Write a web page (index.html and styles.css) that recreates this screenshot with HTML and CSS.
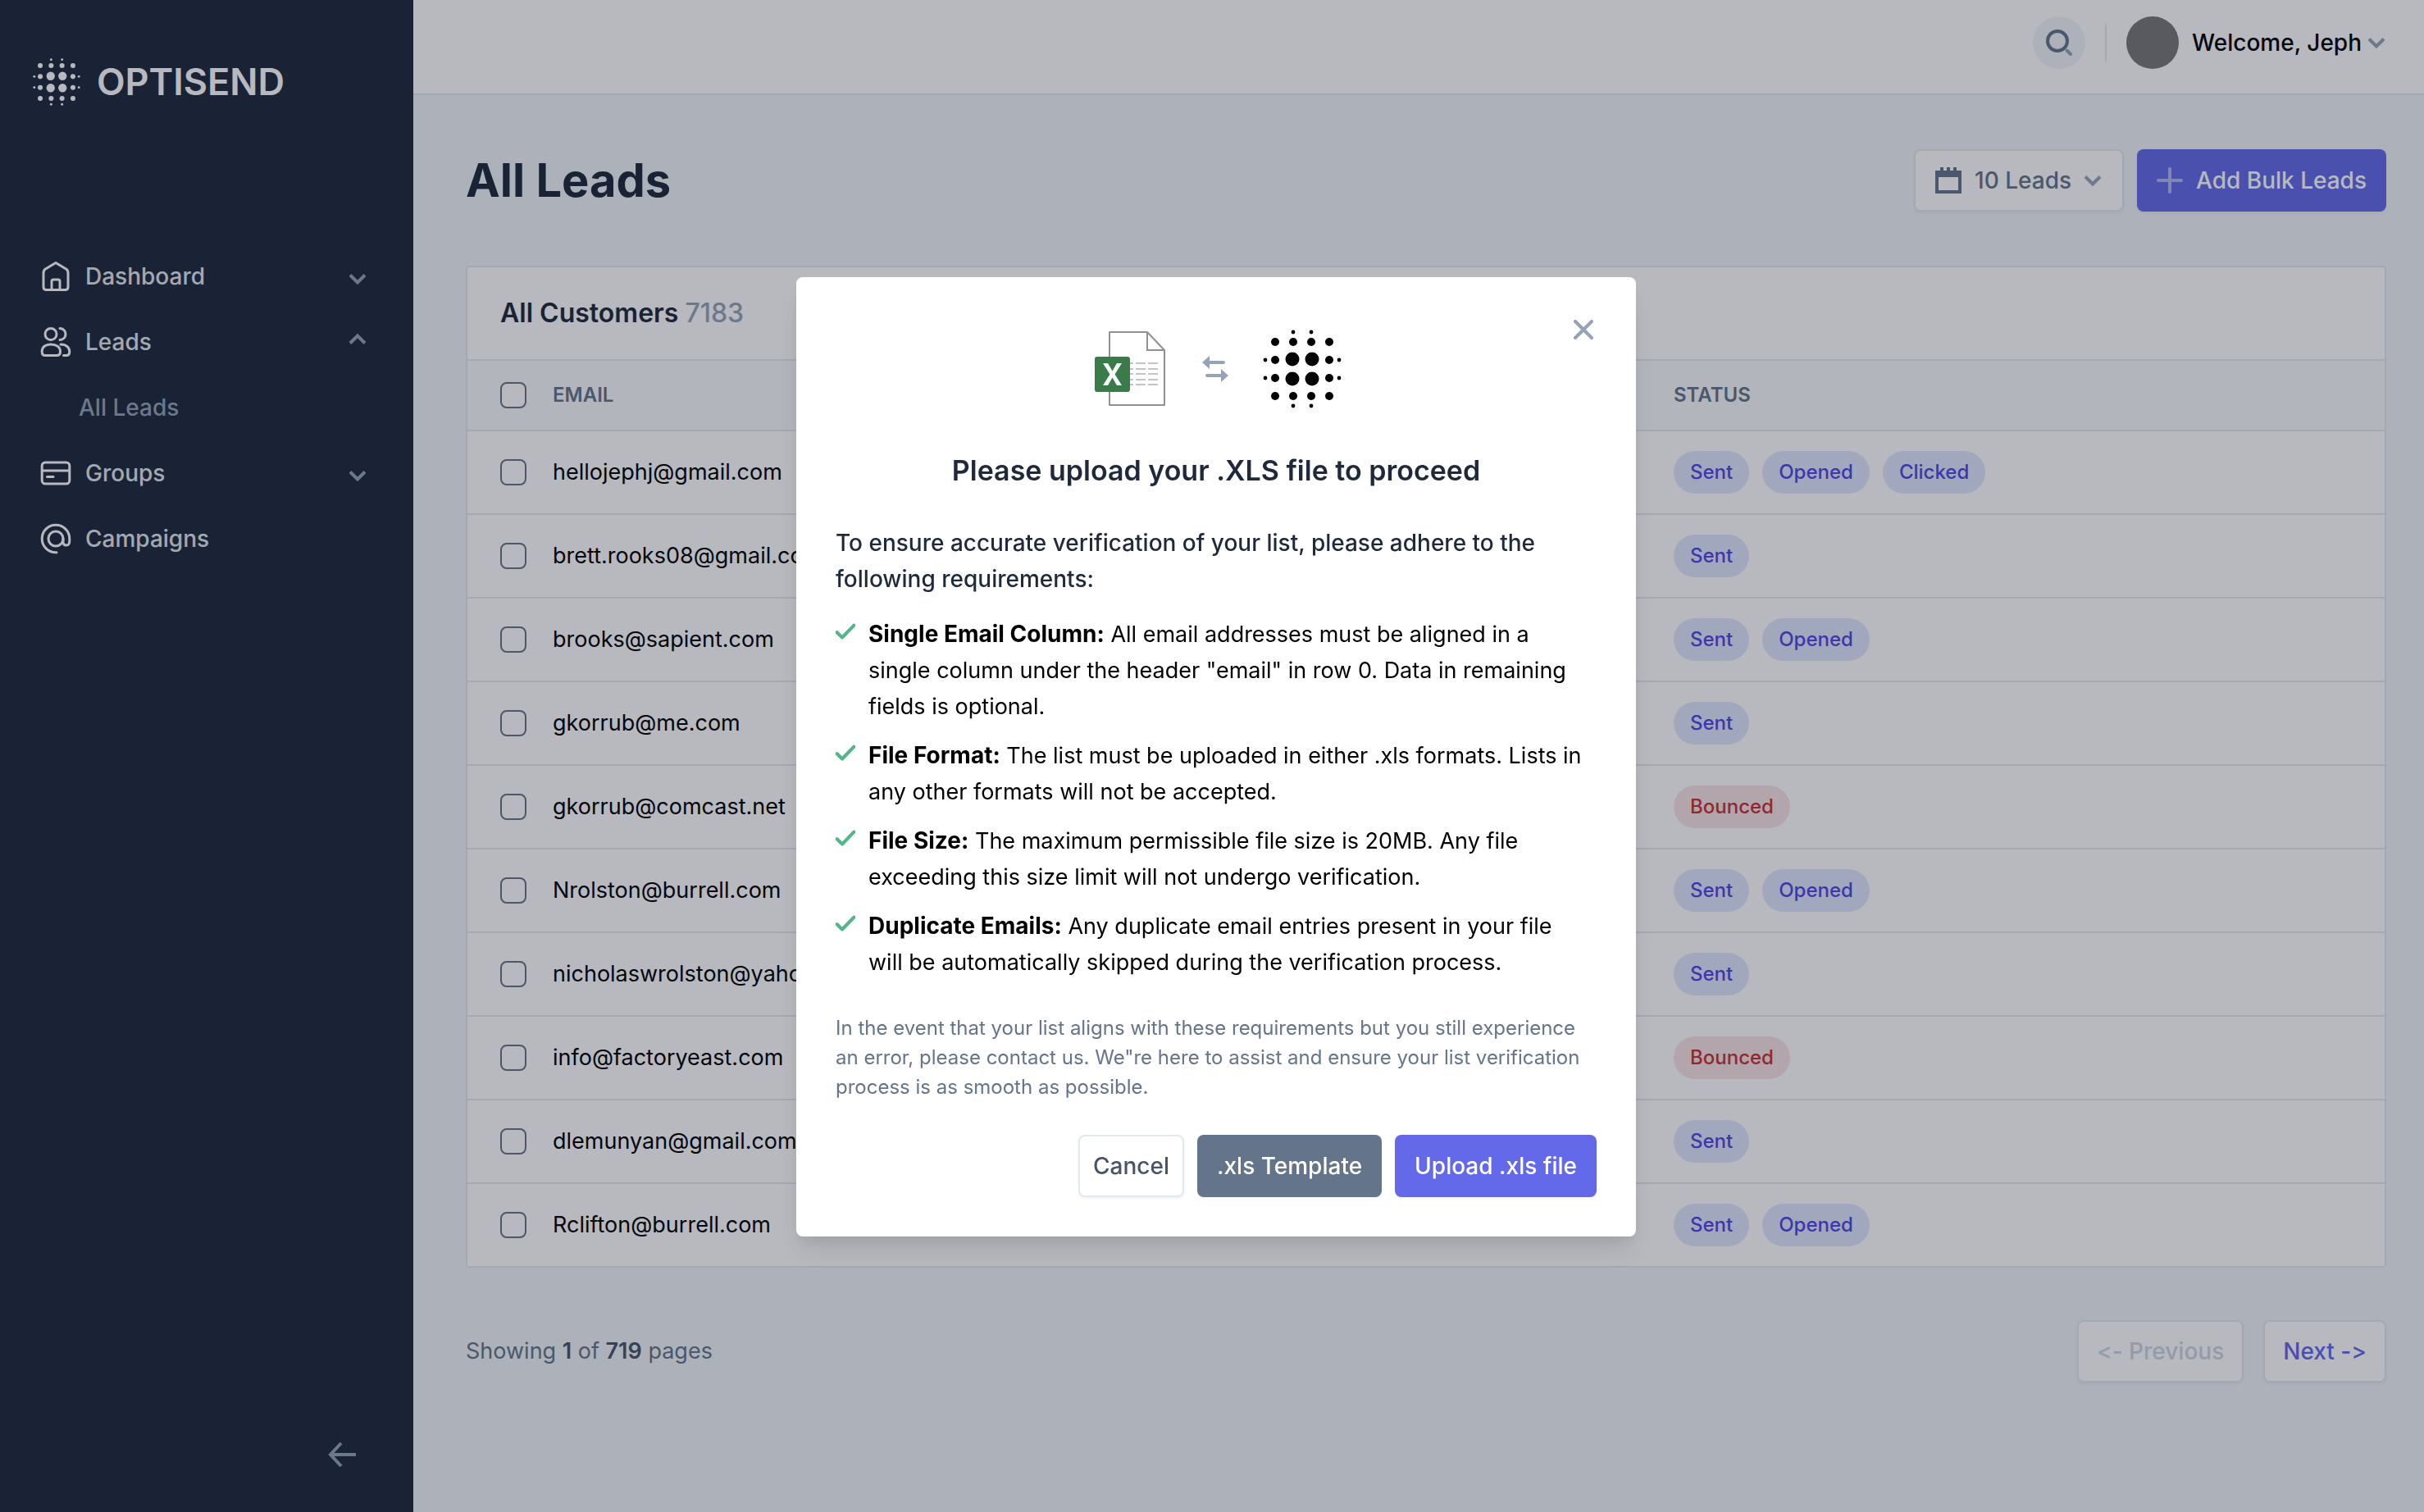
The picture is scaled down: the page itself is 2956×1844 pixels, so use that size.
FILE: index.html
```html
<!DOCTYPE html>
<html lang="en">
<head>
    <meta charset="UTF-8">
    <meta name="viewport" content="width=device-width, initial-scale=1.0">
    <title>Optisend - All Leads</title>
    <link rel="stylesheet" href="styles.css">
</head>
<body>
    <svg class="defs" aria-hidden="true">
        <symbol id="logo-dots" viewBox="0 0 96 96">
            <circle cx="37" cy="3" r="2.4"/><circle cx="59" cy="3" r="2.4"/>
            <circle cx="15" cy="15" r="5"/><circle cx="37" cy="15" r="5"/><circle cx="59" cy="15" r="5"/><circle cx="81" cy="15" r="5"/>
            <circle cx="3" cy="37" r="2.4"/><circle cx="15" cy="37" r="5"/><circle cx="36" cy="36" r="8.5"/><circle cx="60" cy="36" r="8.5"/><circle cx="81" cy="37" r="5"/><circle cx="93" cy="37" r="2.4"/>
            <circle cx="3" cy="59" r="2.4"/><circle cx="15" cy="59" r="5"/><circle cx="36" cy="60" r="8.5"/><circle cx="60" cy="60" r="8.5"/><circle cx="81" cy="59" r="5"/><circle cx="93" cy="59" r="2.4"/>
            <circle cx="15" cy="81" r="5"/><circle cx="37" cy="81" r="5"/><circle cx="59" cy="81" r="5"/><circle cx="81" cy="81" r="5"/>
            <circle cx="37" cy="93" r="2.4"/><circle cx="59" cy="93" r="2.4"/>
        </symbol>
        <symbol id="chevron" viewBox="0 0 24 16">
            <path d="M3 3.500 12 12.500l9-9" fill="none" stroke="currentColor" stroke-width="4"/>
        </symbol>
        <symbol id="check" viewBox="0 0 24 20">
            <path d="M1.500 11 8 17.500 22.500 2.500" fill="none" stroke="currentColor" stroke-width="4" stroke-linecap="round" stroke-linejoin="round"/>
        </symbol>
    </svg>

    <div class="app">
        <aside class="sidebar">
            <a class="logo" href="#">
                <svg class="logo-icon"><use href="#logo-dots"/></svg>
                <span>OPTISEND</span>
            </a>
            <nav class="nav">
                <a class="nav-link" href="#">
                    <svg class="nav-icon" viewBox="0 0 36 36"><path d="M3 14Q3 10.500 5.500 9L18 1.500 30.500 9Q33 10.500 33 14V31q0 3.500-3.500 3.500h-23Q3 34.500 3 31zM13 34.500V24q0-2 2-2h6q2 0 2 2v10.500"/></svg>
                    Dashboard
                    <svg class="chevron"><use href="#chevron"/></svg>
                </a>
                <a class="nav-link" href="#">
                    <svg class="nav-icon" viewBox="0 0 36 36"><circle cx="12" cy="8.500" r="7"/><path d="M23 1.500a7 7 0 0 1 0 14M5 34.500h14q4.500 0 4.500-4.500c0-6-5-9-11.500-9S1.200 24 1.200 30q0 4.500 3.800 4.500zM24 21c7 0 10.800 4 10.800 9q0 4.500-4 4.500H27.500"/></svg>
                    Leads
                    <svg class="chevron up"><use href="#chevron"/></svg>
                </a>
                <a class="nav-link nav-sub" href="#">All Leads</a>
                <a class="nav-link" href="#">
                    <svg class="nav-icon" viewBox="0 0 36 36"><rect x="1.200" y="5" width="33.600" height="26" rx="4"/><path d="M1.200 15h33.600M7.500 22.500h7.500"/></svg>
                    Groups
                    <svg class="chevron"><use href="#chevron"/></svg>
                </a>
                <a class="nav-link" href="#">
                    <svg class="nav-icon" viewBox="0 0 36 36"><circle cx="18" cy="18" r="9"/><path d="M27 18v4q0 4 4 4t3.800-6V18A16.800 16.800 0 1 0 18 34.800h1"/></svg>
                    Campaigns
                </a>
            </nav>
            <button class="collapse" type="button" aria-label="Collapse sidebar">
                <svg viewBox="0 0 34 36"><path d="M16 4 3 18l13 14M3 18h31"/></svg>
            </button>
        </aside>

        <div class="page">
            <header class="topbar">
                <button class="search" type="button" aria-label="Search">
                    <svg viewBox="0 0 32 32"><circle cx="14" cy="14" r="12" stroke="#64748b" stroke-width="4"/><path d="M25.500 25.500 30 30" stroke="#94a3b8" stroke-width="4" stroke-linecap="round"/></svg>
                </button>
                <span class="divider"></span>
                <button class="user" type="button">
                    <span class="avatar"></span>
                    Welcome, Jeph
                    <svg class="chevron"><use href="#chevron"/></svg>
                </button>
            </header>

            <main class="content">
                <div class="page-head">
                    <h1>All Leads</h1>
                    <div class="actions">
                        <button class="btn btn-light btn-count" type="button">
                            <svg class="calendar" viewBox="0 0 32 32"><path fill="currentColor" fill-rule="evenodd" d="M6 0h4v4h4V0h4v4h4V0h4v4h6v28H0V4h6zM4 12v16h24V12z"/></svg>
                            10 Leads
                            <svg class="chevron"><use href="#chevron"/></svg>
                        </button>
                        <button class="btn btn-primary" type="button">
                            <svg class="plus" viewBox="0 0 32 32"><path d="M16 2v28M2 16h28"/></svg>
                            Add Bulk Leads
                        </button>
                    </div>
                </div>

                <section class="card">
                    <h2>All Customers <span>7183</span></h2>
                    <table>
                        <thead>
                            <tr>
                                <th class="col-check"><input type="checkbox" aria-label="Select all"></th>
                                <th class="col-email">Email</th>
                                <th>Status</th>
                            </tr>
                        </thead>
                        <tbody>
                            <tr>
                                <td><input type="checkbox" id="lead-1"></td>
                                <td><label for="lead-1">hellojephj@gmail.com</label></td>
                                <td><div class="badges"><span class="badge">Sent</span><span class="badge">Opened</span><span class="badge">Clicked</span></div></td>
                            </tr>
                            <tr>
                                <td><input type="checkbox" id="lead-2"></td>
                                <td><label for="lead-2">brett.rooks08@gmail.com</label></td>
                                <td><div class="badges"><span class="badge">Sent</span></div></td>
                            </tr>
                            <tr>
                                <td><input type="checkbox" id="lead-3"></td>
                                <td><label for="lead-3">brooks@sapient.com</label></td>
                                <td><div class="badges"><span class="badge">Sent</span><span class="badge">Opened</span></div></td>
                            </tr>
                            <tr>
                                <td><input type="checkbox" id="lead-4"></td>
                                <td><label for="lead-4">gkorrub@me.com</label></td>
                                <td><div class="badges"><span class="badge">Sent</span></div></td>
                            </tr>
                            <tr>
                                <td><input type="checkbox" id="lead-5"></td>
                                <td><label for="lead-5">gkorrub@comcast.net</label></td>
                                <td><div class="badges"><span class="badge badge-red">Bounced</span></div></td>
                            </tr>
                            <tr>
                                <td><input type="checkbox" id="lead-6"></td>
                                <td><label for="lead-6">Nrolston@burrell.com</label></td>
                                <td><div class="badges"><span class="badge">Sent</span><span class="badge">Opened</span></div></td>
                            </tr>
                            <tr>
                                <td><input type="checkbox" id="lead-7"></td>
                                <td><label for="lead-7">nicholaswrolston@yahoo.com</label></td>
                                <td><div class="badges"><span class="badge">Sent</span></div></td>
                            </tr>
                            <tr>
                                <td><input type="checkbox" id="lead-8"></td>
                                <td><label for="lead-8">info@factoryeast.com</label></td>
                                <td><div class="badges"><span class="badge badge-red">Bounced</span></div></td>
                            </tr>
                            <tr>
                                <td><input type="checkbox" id="lead-9"></td>
                                <td><label for="lead-9">dlemunyan@gmail.com</label></td>
                                <td><div class="badges"><span class="badge">Sent</span></div></td>
                            </tr>
                            <tr>
                                <td><input type="checkbox" id="lead-10"></td>
                                <td><label for="lead-10">Rclifton@burrell.com</label></td>
                                <td><div class="badges"><span class="badge">Sent</span><span class="badge">Opened</span></div></td>
                            </tr>
                        </tbody>
                    </table>
                </section>

                <div class="pagination">
                    <p>Showing <b>1</b> of <b>719</b> pages</p>
                    <div class="pager">
                        <button class="btn btn-light btn-prev" type="button" disabled>&lt;- Previous</button>
                        <button class="btn btn-light btn-next" type="button">Next -&gt;</button>
                    </div>
                </div>
            </main>
        </div>
    </div>

    <div class="overlay">
        <div class="modal" role="dialog" aria-modal="true" aria-labelledby="modal-title">
            <button class="close" type="button" aria-label="Close">
                <svg viewBox="0 0 24 24"><path d="M2 2l20 20M22 2 2 22"/></svg>
            </button>
            <div class="modal-icons">
                <svg class="excel" viewBox="0 0 90 94">
                    <path d="M19 2h46l21 22v67H19z" fill="#fff" stroke="#909090" stroke-width="2" stroke-linejoin="round"/>
                    <path d="M65 2v22h21" fill="none" stroke="#909090" stroke-width="2"/>
                    <path d="M44 40h4M51 40h12M66 40h12M44 47h4M51 47h12M66 47h12M44 53h4M51 53h12M66 53h12M44 60h4M51 60h12M66 60h12M44 66h4M51 66h12M66 66h12" stroke="#c4c4c4" stroke-width="2"/>
                    <rect x="1" y="32" width="43" height="43" rx="3" fill="#3a7b4a"/>
                    <path d="M11 40h6l5.500 9.500L28 40h6l-8.500 13.500L34 67h-6l-5.500-9.500L17 67h-6l8.500-13.500z" fill="#fff"/>
                </svg>
                <svg class="swap" viewBox="0 0 32 32"><path d="M9 0v6h17q2 0 2 2t-2 2H9v6L0 8zM23 16v6H6q-2 0-2 2t2 2h17v6l9-8z"/></svg>
                <svg class="dots"><use href="#logo-dots"/></svg>
            </div>
            <h3 id="modal-title">Please upload your .XLS file to proceed</h3>
            <p class="intro">To ensure accurate verification of your list, please adhere to the following requirements:</p>
            <ul>
                <li><svg class="check"><use href="#check"/></svg><p><b>Single Email Column:</b> All email addresses must be aligned in a single column under the header "email" in row 0. Data in remaining fields is optional.</p></li>
                <li><svg class="check"><use href="#check"/></svg><p><b>File Format:</b> The list must be uploaded in either .xls formats. Lists in any other formats will not be accepted.</p></li>
                <li><svg class="check"><use href="#check"/></svg><p><b>File Size:</b> The maximum permissible file size is 20MB. Any file exceeding this size limit will not undergo verification.</p></li>
                <li><svg class="check"><use href="#check"/></svg><p><b>Duplicate Emails:</b> Any duplicate email entries present in your file will be automatically skipped during the verification process.</p></li>
            </ul>
            <p class="note">In the event that your list aligns with these requirements but you still experience an error, please contact us. We"re here to assist and ensure your list verification process is as smooth as possible.</p>
            <div class="modal-actions">
                <button class="btn btn-light btn-cancel" type="button">Cancel</button>
                <button class="btn btn-slate" type="button">.xls Template</button>
                <button class="btn btn-primary" type="button">Upload .xls file</button>
            </div>
        </div>
    </div>
</body>
</html>
```

FILE: styles.css
```css
* {
    box-sizing: border-box;
}

body {
    margin: 0;
    background: #f1f5f9;
    color: #000;
    font-family: Inter, "Liberation Sans", sans-serif;
    font-size: 28px;
    line-height: 44px;
    font-variant-ligatures: none; /* keeps "<-" and "->" as typed */
}

h1, h2, h3, p, ul {
    margin: 0;
    padding: 0;
}

button {
    border: 0;
    padding: 0;
    background: none;
    color: inherit;
    font: inherit;
    font-variant-ligatures: none;
    cursor: pointer;
}

a {
    color: inherit;
    text-decoration: none;
}

svg {
    display: block;
    flex: none;
}

.defs {
    position: absolute;
    width: 0;
    height: 0;
}

.app {
    display: flex;
    min-height: 100vh;
}

.chevron {
    width: 24px;
    height: 16px;
    color: #94a3b8;
}

/* Sidebar */
.sidebar {
    display: flex;
    flex-direction: column;
    flex: none;
    width: 504px;
    padding: 68px 56px 52px 40px;
    background: #1e293b;
    color: #e2e8f0;
    font-weight: 500;
}

.logo {
    display: flex;
    align-items: center;
    gap: 20px;
    height: 64px;
    color: #fff;
    font-size: 45px;
    font-weight: 600;
}

.logo-icon {
    width: 58px;
    height: 58px;
    fill: #fff;
}

.nav {
    margin-top: 165px;
}

.nav-link {
    display: flex;
    align-items: center;
    gap: 18px;
    height: 80px;
    padding-left: 10px;
}

.nav-icon {
    width: 36px;
    height: 36px;
    fill: none;
    stroke: #fff;
    stroke-width: 3;
    stroke-linecap: round;
    stroke-linejoin: round;
    overflow: visible;
}

.nav-link .chevron {
    margin-left: auto;
    margin-top: 6px;
}

.nav-link .up {
    margin-top: 0;
    margin-bottom: 6px;
    transform: rotate(180deg);
}

.nav-sub {
    padding-left: 56px;
    color: #94a3b8;
}

.collapse {
    margin-top: auto;
    align-self: flex-end;
    margin-right: 14px;
}

.collapse svg {
    width: 34px;
    height: 36px;
    fill: none;
    stroke: #94a3b8;
    stroke-width: 4;
}

/* Top bar */
.page {
    flex: 1;
    min-width: 0;
}

.topbar {
    display: flex;
    align-items: center;
    justify-content: flex-end;
    gap: 24px;
    height: 116px;
    padding: 0 46px 10px;
    border-bottom: 2px solid #e2e8f0;
    background: #fff;
}

.search {
    display: grid;
    place-items: center;
    width: 64px;
    height: 64px;
    border-radius: 50%;
    background: #f1f5f9;
}

.search svg {
    width: 32px;
    height: 32px;
    fill: none;
}

.divider {
    width: 2px;
    height: 48px;
    background: #e2e8f0;
}

.user {
    display: flex;
    align-items: center;
    font-weight: 500;
}

.avatar {
    width: 64px;
    height: 64px;
    margin-right: 16px;
    border-radius: 50%;
    background: #777;
}

.user .chevron {
    margin-left: 6px;
}

/* Buttons */
.btn {
    display: flex;
    align-items: center;
    justify-content: center;
    height: 76px;
    padding: 0 24px;
    border-radius: 8px;
    box-shadow: 0 2px 4px rgba(0, 0, 0, 0.05);
    font-weight: 500;
    white-space: nowrap;
}

.btn-light {
    border: 2px solid #e2e8f0;
    background: #fff;
}

.btn-primary {
    background: #6469e9;
    color: #fff;
}

.btn-slate {
    background: #64748b;
    color: #fff;
}

.btn-count {
    color: #64748b;
}

.calendar {
    width: 32px;
    height: 32px;
    margin-right: 16px;
}

.btn-count .chevron {
    margin-left: 14px;
}

.plus {
    width: 32px;
    height: 32px;
    margin-right: 16px;
    stroke: #b3b6f5;
    stroke-width: 4;
    stroke-linecap: round;
}

/* Main content */
.content {
    padding: 64px 46px 64px 64px;
}

.page-head {
    display: flex;
    align-items: center;
    justify-content: space-between;
    height: 80px;
    margin-bottom: 64px;
}

h1 {
    color: #1e293b;
    font-size: 56px;
    font-weight: 700;
    line-height: 80px;
}

.actions {
    display: flex;
    gap: 16px;
}

.card {
    border: 2px solid #e2e8f0;
    border-radius: 4px;
    background: #fff;
}

h2 {
    padding: 34px 40px;
    color: #1e293b;
    font-size: 32px;
    font-weight: 600;
    line-height: 44px;
}

h2 span {
    color: #94a3b8;
    font-weight: 500;
}

table {
    width: 100%;
    table-layout: fixed;
    border-collapse: separate;
    border-spacing: 0;
}

th, td {
    height: 102px;
    padding: 0;
    border-bottom: 2px solid #e2e8f0;
    text-align: left;
    vertical-align: middle;
}

td {
    font-size: 27px;
}

th {
    height: 88px;
    border-top: 2px solid #e2e8f0;
    background: #f8fafc;
    color: #64748b;
    font-size: 24px;
    font-weight: 600;
    text-transform: uppercase;
}

tbody tr:last-child td {
    height: 100px;
    border-bottom: 0;
}

.col-check {
    width: 104px;
}

.col-email {
    width: 1367px;
}

td:first-child,
th:first-child {
    padding-left: 40px;
}

input[type="checkbox"] {
    display: block;
    appearance: none;
    width: 32px;
    height: 32px;
    margin: 0;
    border: 2px solid #6b7280;
    border-radius: 8px;
    background: #fff;
}

.badges {
    display: flex;
    gap: 16px;
}

.badge {
    padding: 4px 20px;
    border-radius: 26px;
    background: #e0e7ff;
    color: #4f46e5;
    font-size: 24px;
    font-weight: 500;
}

.badge-red {
    background: #f8e3e4;
    color: #cb3030;
}

.pagination {
    display: flex;
    align-items: center;
    justify-content: space-between;
    margin-top: 64px;
    color: #64748b;
}

.pagination p {
    font-size: 27px;
}

.pagination b {
    color: #475569;
    font-weight: 600;
}

.pager {
    display: flex;
    gap: 24px;
}

.pager .btn {
    padding: 0 22px;
}

.btn-prev {
    color: #cbd5e1;
}

.btn-next {
    color: #6366f1;
}

/* Upload dialog */
.overlay {
    position: fixed;
    inset: 0;
    display: flex;
    align-items: center;
    justify-content: center;
    padding: 2px 0 0 10px;
    background: rgba(17, 24, 39, 0.3);
}

.modal {
    position: relative;
    width: 1024px;
    max-width: 100%;
    padding: 64px 48px 48px;
    border-radius: 8px;
    background: #fff;
    box-shadow: 0 20px 30px -6px rgba(0, 0, 0, 0.1), 0 8px 12px -4px rgba(0, 0, 0, 0.05);
}

.close {
    position: absolute;
    top: 52px;
    right: 52px;
}

.close svg {
    width: 24px;
    height: 24px;
    fill: none;
    stroke: #94a3b8;
    stroke-width: 4;
    stroke-linecap: round;
}

.modal-icons {
    display: flex;
    align-items: center;
    justify-content: center;
    gap: 42px;
    height: 96px;
    padding-left: 4px;
}

.excel {
    width: 90px;
    height: 94px;
}

.swap {
    width: 32px;
    height: 32px;
    fill: #94a3b8;
}

.dots {
    width: 96px;
    height: 96px;
}

h3 {
    margin-top: 48px;
    color: #1e293b;
    font-size: 34px;
    font-weight: 600;
    line-height: 56px;
    text-align: center;
}

.intro {
    margin: 38px 0 24px;
    color: #1e293b;
    font-weight: 500;
}

ul {
    list-style: none;
}

li {
    display: flex;
    gap: 16px;
    margin-bottom: 16px;
    padding-right: 12px;
    font-size: 27px;
}

li b {
    font-size: 28px;
    line-height: 28px;
}

.check {
    width: 24px;
    height: 20px;
    margin-top: 8px;
    color: #52b788;
}

.note {
    margin: 40px 0;
    color: #64748b;
    font-size: 24px;
    line-height: 36px;
}

.modal-actions {
    display: flex;
    justify-content: flex-end;
    gap: 16px;
}

.btn-cancel {
    padding: 0 16px;
    color: #475569;
}
```
